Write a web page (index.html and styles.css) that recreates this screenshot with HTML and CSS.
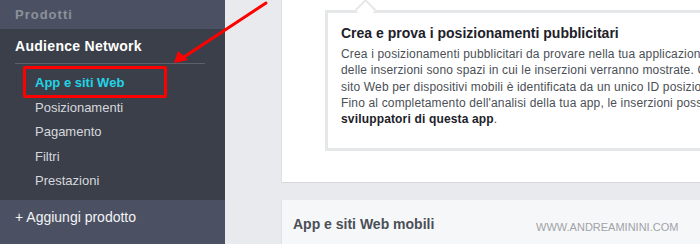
FILE: index.html
```html
<!DOCTYPE html>
<html lang="it">
<head>
<meta charset="utf-8">
<title>Audience Network</title>
<link rel="stylesheet" href="styles.css">
</head>
<body>
<div class="page">
  <aside class="sidebar">
    <div class="sb-head">Prodotti</div>
    <div class="sb-main">
      <div class="sb-title">Audience Network</div>
      <div class="sb-divider"></div>
      <ul class="sb-list">
        <li class="active">App e siti Web</li>
        <li>Posizionamenti</li>
        <li>Pagamento</li>
        <li>Filtri</li>
        <li>Prestazioni</li>
      </ul>
    </div>
    <div class="sb-foot">+ Aggiungi prodotto</div>
  </aside>
  <main class="main">
    <section class="card">
      <div class="tip">
        <span class="tip-arrow"></span>
        <h2 class="tip-title">Crea e prova i posizionamenti pubblicitari</h2>
        <p class="tip-text">Crea i posizionamenti pubblicitari da provare nella tua applicazione o nel tuo sito Web. I posizionamenti<br>delle inserzioni sono spazi in cui le inserzioni verranno mostrate. Ogni posizionamento nella tua app o nel tuo<br>sito Web per dispositivi mobili è identificata da un unico ID posizionamento.<br>Fino al completamento dell'analisi della tua app, le inserzioni possono essere mostrate solo agli<br><b>sviluppatori di questa app</b>.</p>
      </div>
    </section>
    <section class="card2">
      <h3 class="card2-title">App e siti Web mobili</h3>
    </section>
  </main>
  <div class="watermark">WWW.ANDREAMININI.COM</div>
  <div class="highlight"></div>
  <svg class="arrow" width="700" height="244" viewBox="0 0 700 244">
    <line x1="266" y1="3" x2="184" y2="57" stroke="#ff0000" stroke-width="3" stroke-linecap="round"/>
    <polygon points="174,63 178,51 188,60" fill="#ff0000"/>
  </svg>
</div>
</body>
</html>
```
FILE: styles.css
```css
html, body {
  margin: 0;
  padding: 0;
}
body {
  font-family: "Liberation Sans", Arial, sans-serif;
  width: 700px;
  height: 244px;
  overflow: hidden;
}
.page {
  position: relative;
  display: flex;
  width: 700px;
  height: 244px;
  overflow: hidden;
  background: #e9eaed;
}
.sidebar {
  width: 225px;
  flex: none;
  display: flex;
  flex-direction: column;
  background: #3b3f4a;
}
.sb-head {
  height: 29px;
  flex: none;
  background: #4b5162;
  color: #8b919c;
  font-weight: bold;
  font-size: 13px;
  letter-spacing: 1px;
  line-height: 29px;
  padding-left: 15px;
  box-sizing: border-box;
}
.sb-main {
  flex: 1;
  padding: 0 20px 0 15px;
}
.sb-title {
  color: #ffffff;
  font-weight: bold;
  font-size: 14px;
  letter-spacing: 0.3px;
  line-height: 16px;
  height: 34px;
  padding-top: 9px;
  box-sizing: border-box;
}
.sb-divider {
  height: 1px;
  background: #5a5f6b;
}
.sb-list {
  list-style: none;
  margin: 0;
  padding: 7px 0 0 20px;
}
.sb-list li {
  color: #d6d8dc;
  font-size: 13px;
  line-height: 24.5px;
  height: 24.5px;
}
.sb-list li.active {
  color: #22d3e6;
  font-weight: bold;
}
.sb-foot {
  height: 44px;
  flex: none;
  background: #4b5162;
  color: #f2f3f5;
  font-size: 14px;
  line-height: 16px;
  padding: 9px 0 0 15px;
  box-sizing: border-box;
}
.main {
  flex: 1;
  padding-left: 57px;
  display: flex;
  flex-direction: column;
  gap: 17px;
}
.card {
  height: 183px;
  flex: none;
  background: #ffffff;
  box-sizing: border-box;
  border-bottom: 1px solid #d4d6da;
  box-shadow: -1px 0 0 #dfe0e3;
  padding: 10px 0 0 43px;
  overflow: hidden;
}
.tip {
  position: relative;
  width: 520px;
  height: 141px;
  box-sizing: border-box;
  border: 3px solid #e6e7e9;
  border-right: none;
  padding: 12px 0 0 13px;
  background: #ffffff;
}
.tip-arrow {
  position: absolute;
  top: -11px;
  left: 30px;
  width: 13px;
  height: 13px;
  background: #ffffff;
  border-top: 2px solid #e6e7e9;
  border-left: 2px solid #e6e7e9;
  transform: rotate(45deg);
}
.tip-title {
  margin: 0;
  font-size: 14px;
  font-weight: bold;
  color: #1d2129;
  line-height: 16px;
}
.tip-text {
  margin: 5px 0 0;
  font-size: 12px;
  letter-spacing: 0.16px;
  line-height: 16.3px;
  color: #4b4f56;
  white-space: nowrap;
}
.tip-text b {
  color: #1d2129;
}
.card2 {
  flex: 1;
  background: #f6f7f9;
  box-shadow: -1px 0 0 #dfe0e3;
  padding: 16px 0 0 11px;
}
.card2-title {
  margin: 0;
  font-size: 14px;
  font-weight: bold;
  color: #4b4f56;
  line-height: 16px;
}
.watermark {
  position: absolute;
  left: 536px;
  top: 221px;
  font-size: 11px;
  line-height: 13px;
  color: #a0a3a8;
}
.highlight {
  position: absolute;
  left: 23px;
  top: 66px;
  width: 144px;
  height: 32px;
  box-sizing: border-box;
  border: 3px solid #ff0000;
  border-radius: 2px;
}
.arrow {
  position: absolute;
  left: 0;
  top: 0;
}
```
